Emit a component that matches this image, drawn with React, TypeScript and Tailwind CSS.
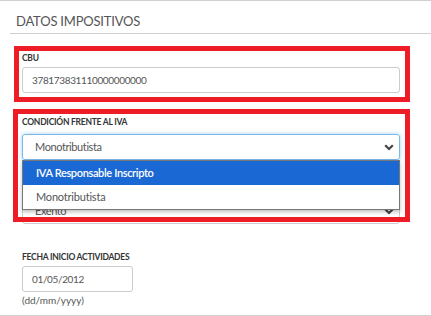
function Label({ children }: { children: string }) {
  return (
    <div className="text-[8.5px] font-bold uppercase leading-[12px] text-[#333] tracking-[-0.25px]">
      {children}
    </div>
  );
}

function Chevron() {
  return (
    <svg width="10" height="7" viewBox="0 0 10 7" className="shrink-0">
      <path d="M1.2 1.3 L5 5 L8.8 1.3" fill="none" stroke="#444" strokeWidth="2.2" />
    </svg>
  );
}

export default function App() {
  return (
    <div className="relative w-[431px] h-[316px] bg-white font-['Lato',sans-serif] overflow-hidden">
      <div className="h-[316px] border-t border-b border-[#cfcfcf]">
        <div className="ml-[10px] h-[33px] border-b border-[#cfcfcf] pl-[6px] pt-[12px] text-[13px] leading-[16px] text-[#555] tracking-[-0.2px]">
          DATOS IMPOSITIVOS
        </div>

        <div className="pl-[22px] w-[400px]">
          <div className="mt-[18px]">
            <Label>CBU</Label>
            <div className="mt-[3px] h-[26px] rounded-[3px] border border-[#ccc] pl-[9px] flex items-center text-[10px] text-[#555] tracking-[-0.35px]">
              378173831110000000000
            </div>
          </div>

          <div className="mt-[23px]">
            <Label>CONDICIÓN FRENTE AL IVA</Label>
            <div className="relative mt-[6px]">
              <div className="h-[26px] rounded-[3px] border border-[#7ab8ec] shadow-[0_0_4px_rgba(102,175,233,0.6)] pl-[12px] pr-[5px] flex items-center justify-between text-[11px] text-[#555] tracking-[-0.4px]">
                Monotributista
                <Chevron />
              </div>
              <div className="absolute left-0 right-0 top-[26px] z-10 bg-white border border-[#777] shadow-[0_2px_4px_rgba(0,0,0,0.25)]">
                <div className="h-[24px] bg-[#1a68d4] pl-[13px] flex items-center text-[11px] font-semibold text-white tracking-[-0.35px]">
                  IVA Responsable Inscripto
                </div>
                <div className="h-[24px] pl-[13px] flex items-center text-[11px] text-[#555] tracking-[-0.2px]">
                  Monotributista
                </div>
              </div>
            </div>
          </div>

          <div className="mt-[38px] h-[26px] rounded-[3px] border border-[#ccc] pl-[12px] pr-[5px] flex items-center justify-between text-[11px] text-[#555] tracking-[-0.4px]">
            Exento
            <Chevron />
          </div>

          <div className="mt-[27px]">
            <Label>FECHA INICIO ACTIVIDADES</Label>
            <div className="mt-[3px] w-[111px] h-[26px] rounded-[3px] border border-[#ccc] pl-[9px] flex items-center text-[10px] text-[#555] tracking-[-0.35px]">
              01/05/2012
            </div>
            <div className="mt-[2px] text-[10px] leading-[13px] text-[#555]">(dd/mm/yyyy)</div>
          </div>
        </div>
      </div>

      <div className="absolute left-[14px] top-[46px] w-[396px] h-[56px] border-[5px] border-[#ee1c25] pointer-events-none" />
      <div className="absolute left-[13px] top-[109px] w-[397px] h-[113px] border-[5px] border-[#ee1c25] z-20 pointer-events-none" />
    </div>
  );
}
